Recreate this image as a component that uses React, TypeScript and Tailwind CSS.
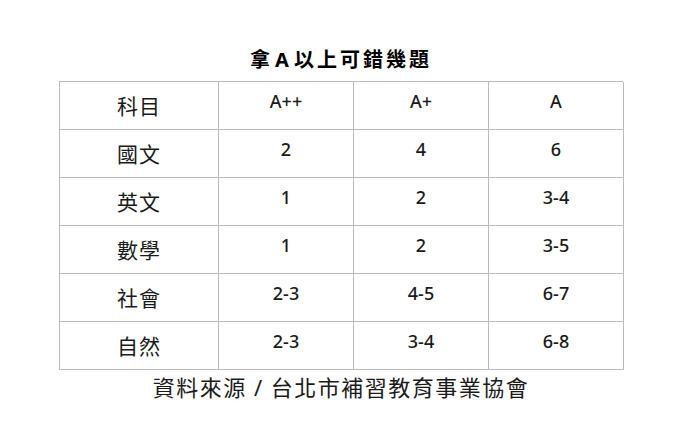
import React from "react";

type Row = {
  subject: string;
  values: [string, string, string];
};

const rows: Row[] = [
  { subject: "國文", values: ["2", "4", "6"] },
  { subject: "英文", values: ["1", "2", "3-4"] },
  { subject: "數學", values: ["1", "2", "3-5"] },
  { subject: "社會", values: ["2-3", "4-5", "6-7"] },
  { subject: "自然", values: ["2-3", "3-4", "6-8"] },
];

const cjk = "font-['Noto_Sans','Noto_Sans_CJK_TC',sans-serif]";

const SubjectCell: React.FC<{ text: string }> = ({ text }) => (
  <div className="h-[48px] flex items-center justify-center border-r border-b border-[#bcbcbc] pt-[2px] text-[21px] tracking-[1px] text-[#1a1a1a]">
    {text}
  </div>
);

const ValueCell: React.FC<{ text: string }> = ({ text }) => (
  <div className="h-[48px] flex items-center justify-center border-r border-b border-[#bcbcbc] pb-[9px] text-[18px] font-medium text-[#1a1a1a]">
    {text}
  </div>
);

const App: React.FC = () => {
  return (
    <div className={`w-[687px] h-[429px] bg-white ${cjk}`}>
      <div className="w-[564px] ml-[59px] pt-[46px] flex flex-col items-center">
        <h1 className="text-[20px] leading-[28px] font-bold tracking-[3px] text-black mb-[7px]">
          拿<span className="mx-[2px]">A</span>以上可錯幾題
        </h1>
        <div className="w-full grid grid-cols-[159px_135px_135px_135px] border-t border-l border-[#bcbcbc]">
          <SubjectCell text="科目" />
          <ValueCell text="A++" />
          <ValueCell text="A+" />
          <ValueCell text="A" />
          {rows.map((row) => (
            <React.Fragment key={row.subject}>
              <SubjectCell text={row.subject} />
              {row.values.map((v, i) => (
                <ValueCell key={i} text={v} />
              ))}
            </React.Fragment>
          ))}
        </div>
        <p className="mt-[2px] text-[22px] leading-[30px] tracking-[1.5px] text-[#1a1a1a]">
          資料來源 / 台北市補習教育事業協會
        </p>
      </div>
    </div>
  );
};

export default App;
